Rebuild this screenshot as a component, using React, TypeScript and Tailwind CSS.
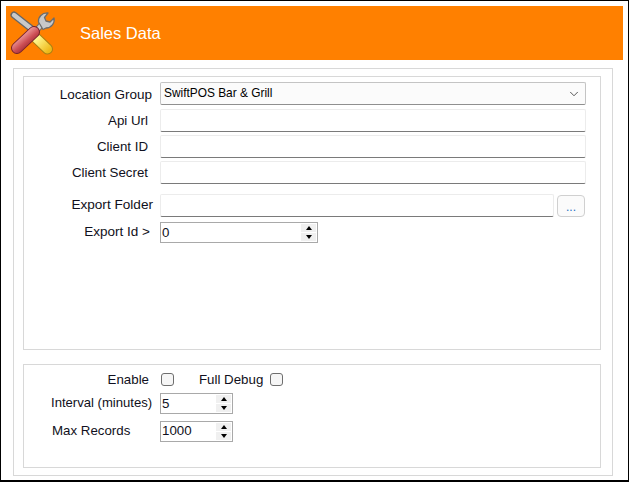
import React from 'react';
import { ChevronDown } from 'lucide-react';

const ToolsIcon: React.FC = () => (
    <svg width="50" height="50" viewBox="0 0 50 50" className="shrink-0">
        <defs>
            <linearGradient id="red" gradientUnits="userSpaceOnUse" x1="10" y1="30" x2="20" y2="42">
                <stop offset="0" stopColor="#ee9a9a" />
                <stop offset="0.5" stopColor="#cc4f55" />
                <stop offset="1" stopColor="#96232d" />
            </linearGradient>
            <linearGradient id="yellow" gradientUnits="userSpaceOnUse" x1="30" y1="30" x2="42" y2="42">
                <stop offset="0" stopColor="#fff58a" />
                <stop offset="1" stopColor="#eeb818" />
            </linearGradient>
        </defs>
        {/* wrench */}
        <path d="M23 29 L34 16" stroke="#6f6f6f" strokeWidth="6" strokeLinecap="round" />
        <path d="M23 29 L34 16" stroke="#cfcfcf" strokeWidth="3.8" strokeLinecap="round" />
        <path d="M30.5 14 C30 9 34 4.5 40 5 L36.5 9.5 L38 13 L42 14 L46 10 C47 15 43.5 20 38 20 L35 21.5 Z" fill="#c8c8c8" stroke="#6c6c6c" strokeWidth="1.3" strokeLinejoin="round" />
        <path d="M28 30 L39.5 41" stroke="#a97f12" strokeWidth="11" strokeLinecap="round" />
        <path d="M28 30 L39.5 41" stroke="url(#yellow)" strokeWidth="9" strokeLinecap="round" />
        {/* screwdriver */}
        <path d="M6 7 L25 22" stroke="#666" strokeWidth="7" strokeLinecap="round" />
        <path d="M6 7 L25 22" stroke="#c9c9c9" strokeWidth="4.4" strokeLinecap="round" />
        <path d="M26 24 L9 40" stroke="#74202a" strokeWidth="12" strokeLinecap="round" />
        <path d="M26 24 L9 40" stroke="url(#red)" strokeWidth="10" strokeLinecap="round" />
    </svg>
);

const TextInput: React.FC<{ className?: string }> = ({ className = '' }) => (
    <div className={`h-[23px] bg-white border border-[#ececec] border-b-[#7a7a7a] rounded-[2px] ${className}`} />
);

const Spinner: React.FC<{ value: string; className: string }> = ({ value, className }) => (
    <div className={`flex items-center justify-between border border-[#a9a9a9] bg-white pl-[1px] pr-[1px] ${className}`}>
        <span>{value}</span>
        <div className="flex flex-col gap-[1px] w-[15px] h-full py-[1px]">
            <div className="flex-1 flex items-center justify-center bg-[#f0f0f0]">
                <div className="w-0 h-0 border-x-[3.5px] border-x-transparent border-b-[4px] border-b-black" />
            </div>
            <div className="flex-1 flex items-center justify-center bg-[#f0f0f0]">
                <div className="w-0 h-0 border-x-[3.5px] border-x-transparent border-t-[4px] border-t-black" />
            </div>
        </div>
    </div>
);

const Label: React.FC<{ children: React.ReactNode; className?: string }> = ({ children, className = '' }) => (
    <span className={`text-right shrink-0 whitespace-nowrap ${className}`}>{children}</span>
);

const CheckBox: React.FC = () => (
    <div className="w-[13px] h-[13px] rounded-[3px] border border-[#6e6e6e] bg-[#f6f6f6]" />
);

export default function App() {
    return (
        <div className="w-[629px] h-[482px] bg-white border-t-[1px] border-l-[1px] border-r-[1px] border-b-[2px] border-black pt-[5px] pl-[5px] pr-[5px] font-['Liberation_Sans',Arial,sans-serif] text-[13.3px] text-[#101020] overflow-hidden">
            <header className="h-[54px] bg-[#ff8000] flex items-center pl-[2px] gap-[22px]">
                <ToolsIcon />
                <h1 className="text-white text-[16.5px] font-normal leading-none mt-[1px]">Sales Data</h1>
            </header>

            <div className="mt-[8px] ml-[7px] w-[600px] h-[408px] border border-[#d8d8d8] pt-[7px] pl-[9px] pr-[11px]">
                <section className="h-[274px] border border-[#d8d8d8] pt-[5px] pr-[14px]">
                    <div className="flex items-center h-[23px]">
                        <Label className="w-[128px] pt-[3px] text-[13.5px]">Location Group</Label>
                        <div className="ml-[8px] flex-1 h-[23px] flex items-center justify-between bg-[#fbfbfb] border border-[#c4c4c4] border-b-[#8f8f8f] rounded-[2px] pl-[3px] pr-[4px] text-[11.9px] text-black">
                            <span className="pt-[1px]">SwiftPOS Bar &amp; Grill</span>
                            <ChevronDown size={14} strokeWidth={1.3} className="text-[#222]" />
                        </div>
                    </div>
                    <div className="flex items-center mt-[4px]">
                        <Label className="w-[124px] pt-[1px]">Api Url</Label>
                        <TextInput className="ml-[12px] flex-1" />
                    </div>
                    <div className="flex items-center mt-[3px]">
                        <Label className="w-[124px] pt-[1px]">Client ID</Label>
                        <TextInput className="ml-[12px] flex-1" />
                    </div>
                    <div className="flex items-center mt-[3px]">
                        <Label className="w-[124px]">Client Secret</Label>
                        <TextInput className="ml-[12px] flex-1" />
                    </div>
                    <div className="flex items-center mt-[10px]">
                        <Label className="w-[129px] text-[13.6px] pb-[1px]">Export Folder</Label>
                        <TextInput className="ml-[7px] w-[394px]" />
                        <button className="ml-[3px] w-[28px] h-[22px] bg-[#fbfbfb] border border-[#d0d0d0] rounded-[4px] text-[#1f6fc4] text-[12px] leading-none pt-[2px]">...</button>
                    </div>
                    <div className="flex items-center mt-[5px]">
                        <Label className="w-[126px] pb-[1px] text-[13.5px]">Export Id &gt;</Label>
                        <Spinner value="0" className="ml-[10px] w-[158px] h-[21px]" />
                    </div>
                </section>

                <section className="mt-[14px] h-[104px] border border-[#d8d8d8] pt-[6px]">
                    <div className="flex items-center h-[17px]">
                        <Label className="w-[125px]">Enable</Label>
                        <div className="ml-[12px]"><CheckBox /></div>
                        <span className="ml-[25px]">Full Debug</span>
                        <div className="ml-[7px]"><CheckBox /></div>
                    </div>
                    <div className="flex items-center mt-[5px]">
                        <span className="ml-[27px] w-[109px] whitespace-nowrap pb-[2px] text-[13.1px]">Interval (minutes)</span>
                        <Spinner value="5" className="w-[73px] h-[21px]" />
                    </div>
                    <div className="flex items-center mt-[6px]">
                        <span className="ml-[28px] w-[108px] whitespace-nowrap">Max Records</span>
                        <Spinner value="1000" className="w-[73px] h-[21px]" />
                    </div>
                </section>
            </div>
        </div>
    );
}
